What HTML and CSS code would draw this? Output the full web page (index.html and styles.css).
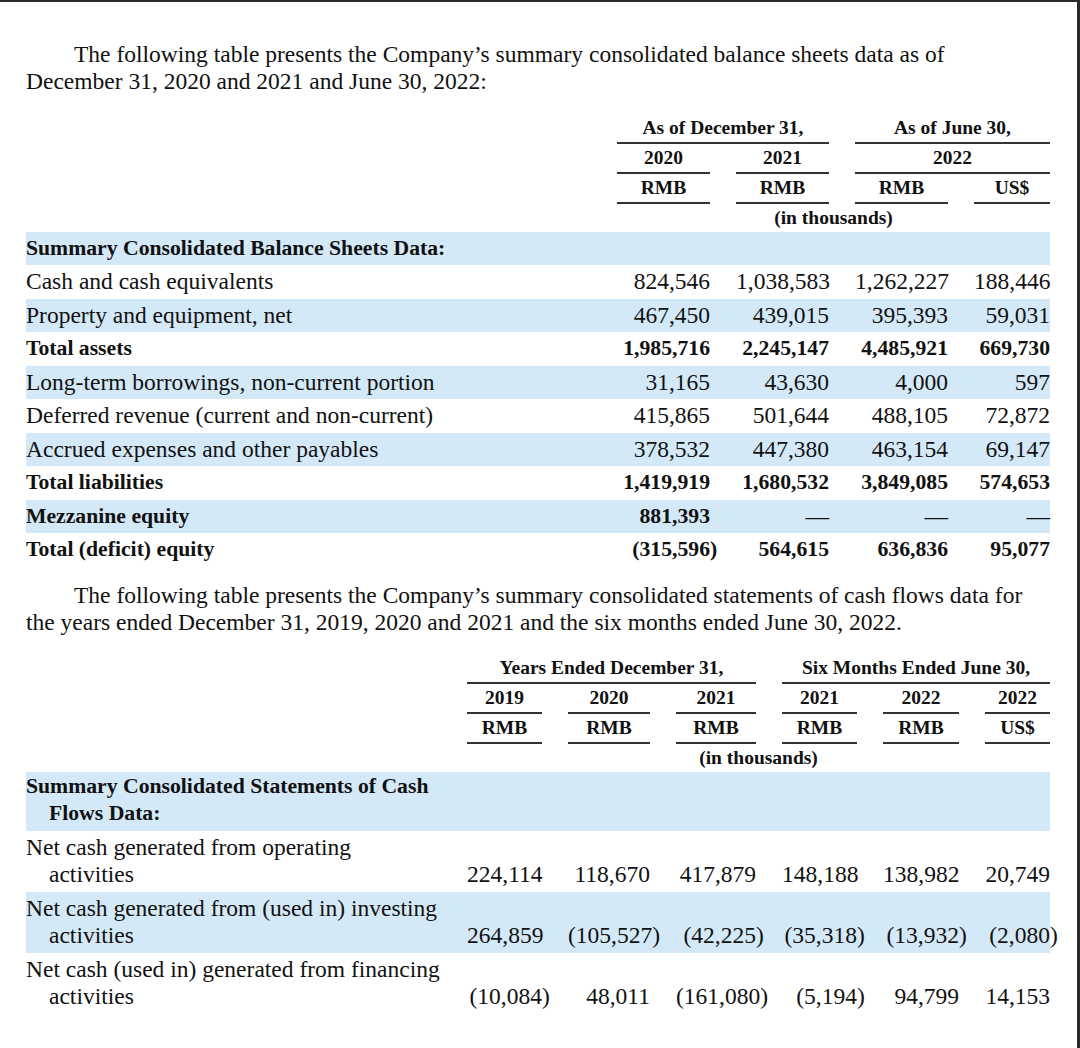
FILE: index.html
```html
<!DOCTYPE html>
<html lang="en">
<head>
<meta charset="utf-8">
<title>Summary consolidated financial data</title>
<link rel="stylesheet" href="styles.css">
</head>
<body>
<main class="page">
  <p class="intro intro-bs">The following table presents the Company’s summary consolidated balance sheets data as of December 31, 2020 and 2021 and June 30, 2022:</p>

  <section class="tbl bs">
    <div class="head">
      <div class="row">
        <span class="u g2-4">As of December 31,</span>
        <span class="u g4-6">As of June 30,</span>
      </div>
      <div class="row">
        <span class="u from2">2020</span>
        <span class="u">2021</span>
        <span class="u g4-6">2022</span>
      </div>
      <div class="row">
        <span class="u from2">RMB</span>
        <span class="u">RMB</span>
        <span class="u">RMB</span>
        <span class="u">US$</span>
      </div>
      <div class="row">
        <span class="g2-6">(in thousands)</span>
      </div>
    </div>
    <div class="body">
      <div class="row b"><span class="lbl">Summary Consolidated Balance Sheets Data:</span></div>
      <div class="row"><span class="lbl">Cash and cash equivalents</span><span class="num">824,546</span><span class="num">1,038,583</span><span class="num">1,262,227</span><span class="num">188,446</span></div>
      <div class="row"><span class="lbl">Property and equipment, net</span><span class="num">467,450</span><span class="num">439,015</span><span class="num">395,393</span><span class="num">59,031</span></div>
      <div class="row b"><span class="lbl">Total assets</span><span class="num">1,985,716</span><span class="num">2,245,147</span><span class="num">4,485,921</span><span class="num">669,730</span></div>
      <div class="row"><span class="lbl">Long-term borrowings, non-current portion</span><span class="num">31,165</span><span class="num">43,630</span><span class="num">4,000</span><span class="num">597</span></div>
      <div class="row"><span class="lbl">Deferred revenue (current and non-current)</span><span class="num">415,865</span><span class="num">501,644</span><span class="num">488,105</span><span class="num">72,872</span></div>
      <div class="row"><span class="lbl">Accrued expenses and other payables</span><span class="num">378,532</span><span class="num">447,380</span><span class="num">463,154</span><span class="num">69,147</span></div>
      <div class="row b"><span class="lbl">Total liabilities</span><span class="num">1,419,919</span><span class="num">1,680,532</span><span class="num">3,849,085</span><span class="num">574,653</span></div>
      <div class="row b"><span class="lbl">Mezzanine equity</span><span class="num">881,393</span><span class="num dash">—</span><span class="num dash">—</span><span class="num dash">—</span></div>
      <div class="row b"><span class="lbl">Total (deficit) equity</span><span class="num">(315,596<span class="rp">)</span></span><span class="num">564,615</span><span class="num">636,836</span><span class="num">95,077</span></div>
    </div>
  </section>

  <p class="intro intro-cf">The following table presents the Company’s summary consolidated statements of cash flows data for the years ended December 31, 2019, 2020 and 2021 and the six months ended June 30, 2022.</p>

  <section class="tbl cf">
    <div class="head">
      <div class="row">
        <span class="u g2-5">Years Ended December 31,</span>
        <span class="u g5-8">Six Months Ended June 30,</span>
      </div>
      <div class="row">
        <span class="u from2">2019</span>
        <span class="u">2020</span>
        <span class="u">2021</span>
        <span class="u">2021</span>
        <span class="u">2022</span>
        <span class="u">2022</span>
      </div>
      <div class="row">
        <span class="u from2">RMB</span>
        <span class="u">RMB</span>
        <span class="u">RMB</span>
        <span class="u">RMB</span>
        <span class="u">RMB</span>
        <span class="u">US$</span>
      </div>
      <div class="row">
        <span class="g2-8">(in thousands)</span>
      </div>
    </div>
    <div class="body">
      <div class="row b"><span class="lbl">Summary Consolidated Statements of Cash<br>Flows Data:</span></div>
      <div class="row"><span class="lbl">Net cash generated from operating<br>activities</span><span class="num">224,114</span><span class="num">118,670</span><span class="num">417,879</span><span class="num">148,188</span><span class="num">138,982</span><span class="num">20,749</span></div>
      <div class="row"><span class="lbl">Net cash generated from (used in) investing<br>activities</span><span class="num">264,859</span><span class="num">(105,527<span class="rp">)</span></span><span class="num">(42,225<span class="rp">)</span></span><span class="num">(35,318<span class="rp">)</span></span><span class="num">(13,932<span class="rp">)</span></span><span class="num">(2,080<span class="rp">)</span></span></div>
      <div class="row"><span class="lbl">Net cash (used in) generated from financing<br>activities</span><span class="num">(10,084<span class="rp">)</span></span><span class="num">48,011</span><span class="num">(161,080<span class="rp">)</span></span><span class="num">(5,194<span class="rp">)</span></span><span class="num">94,799</span><span class="num">14,153</span></div>
    </div>
  </section>
</main>
</body>
</html>
```

FILE: styles.css
```css
* { box-sizing: border-box; }

html, body {
  margin: 0;
  padding: 0;
  background: #ffffff;
}

body {
  font-family: "Liberation Serif", "Times New Roman", serif;
  color: #111111;
}

.page {
  width: 1080px;
  height: 1048px;
  border-top: 2px solid #2a2a2a;
  border-right: 3px solid #2a2a2a;
  padding: 39px 0 0 26px;
  overflow: hidden;
}

.intro {
  margin: 0;
  width: 1010px;
  font-size: 23.5px;
  line-height: 27px;
  text-indent: 48px;
}

.intro-bs { margin-bottom: 18.5px; }
.intro-cf { margin: 15px 0 18.5px; }

.tbl { width: 1024px; }

.row {
  display: grid;
  column-gap: 26px;
}

.bs .row { grid-template-columns: 565px 93px 93px 93px 76px; }
.cf .row { grid-template-columns: 415px 75px 82px 80px 75px 76px 65px; }

.head .row {
  font-size: 19.5px;
  font-weight: bold;
  line-height: 28px;
  text-align: center;
  white-space: nowrap;
}

.head .u { border-bottom: 2px solid #333333; }

.from2 { grid-column-start: 2; }
.g2-4 { grid-column: 2 / 4; }
.g4-6 { grid-column: 4 / 6; }
.g2-6 { grid-column: 2 / 6; }
.g2-5 { grid-column: 2 / 5; }
.g5-8 { grid-column: 5 / 8; }
.g2-8 { grid-column: 2 / 8; }

.body .row { font-size: 23.5px; }
.body .row:nth-child(odd) { background: #d4e9f8; }
.body .row.b { font-size: 21.7px; font-weight: bold; }

.bs .body .row { line-height: 33.5px; }

.cf .body .row {
  line-height: 27px;
  padding: 2.5px 0 4.5px;
}

.cf .body .row:first-child { padding: 1px 0 4px; }

.dash {
  font-weight: normal;
  font-size: 23.5px;
}

.lbl { white-space: nowrap; }

.cf .lbl {
  padding-left: 23px;
  text-indent: -23px;
}

.num {
  text-align: right;
  white-space: nowrap;
}

.cf .num { align-self: end; }

.rp { margin-right: -0.333em; }
```
